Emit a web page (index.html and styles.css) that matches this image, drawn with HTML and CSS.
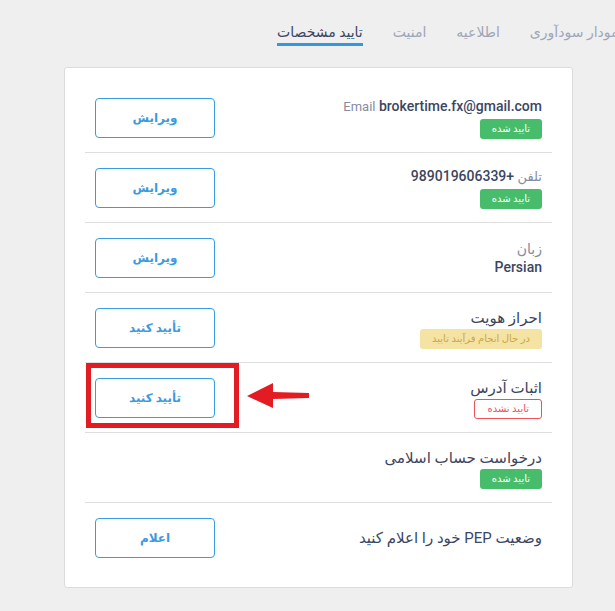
FILE: index.html
```html
<!doctype html>
<html lang="fa" dir="rtl">
<head>
    <meta charset="UTF-8">
    <title>تایید مشخصات</title>
    <link rel="stylesheet" href="styles.css">
</head>
<body>
<div class="tabs">
    <a class="tab">نمودار سودآوری</a>
    <a class="tab">اطلاعیه</a>
    <a class="tab">امنیت</a>
    <a class="tab active">تایید مشخصات</a>
</div>

<div class="card">
    <div class="rows">
        <div class="row">
            <div class="info">
                <div class="line"><span class="label">Email</span> <b>brokertime.fx@gmail.com</b></div>
                <span class="badge ok">تایید شده</span>
            </div>
            <button class="btn">ویرایش</button>
        </div>
        <div class="row">
            <div class="info">
                <div class="line"><span class="label">تلفن</span> <b>+989019606339</b></div>
                <span class="badge ok">تایید شده</span>
            </div>
            <button class="btn">ویرایش</button>
        </div>
        <div class="row">
            <div class="info">
                <div class="small label">زبان</div>
                <div class="small"><b>Persian</b></div>
            </div>
            <button class="btn">ویرایش</button>
        </div>
        <div class="row">
            <div class="info">
                <div class="title">احراز هویت</div>
                <span class="badge pending">در حال انجام فرآیند تایید</span>
            </div>
            <button class="btn">تأیید کنید</button>
        </div>
        <div class="row">
            <div class="info">
                <div class="title">اثبات آدرس</div>
                <span class="badge failed">تایید نشده</span>
            </div>
            <button class="btn">تأیید کنید</button>
        </div>
        <div class="row">
            <div class="info">
                <div class="title">درخواست حساب اسلامی</div>
                <span class="badge ok">تایید شده</span>
            </div>
        </div>
        <div class="row">
            <div class="info">
                <div class="title">وضعیت PEP خود را اعلام کنید</div>
            </div>
            <button class="btn">اعلام</button>
        </div>
    </div>

    <div class="highlight"></div>
    <svg class="arrow" width="66" height="28" viewBox="0 0 66 28">
        <polygon fill="#e31b23" points="0,14 26,1 26,10 62,11 62,16 26,17 26,26"/>
    </svg>
</div>
</body>
</html>
```

FILE: styles.css
```css
html,
body {
    margin: 0;
    overflow: hidden;
}

body {
    background: #efefef;
    font-family: Roboto, "DejaVu Sans", sans-serif;
    color: #3b4661;
    width: 615px;
    height: 611px;
}

.tabs {
    display: flex;
    gap: 30px;
    height: 46px;
    margin-right: -8px;
    white-space: nowrap;
}

.tab {
    font-size: 14px;
    color: #9ea6b8;
    padding-top: 22px;
    height: 21px;
    line-height: 20px;
}

.tab.active {
    color: #3b4661;
    border-bottom: 3px solid #3498db;
}

.card {
    position: relative;
    box-sizing: border-box;
    width: 509px;
    margin: 21px 42px 0 0;
    background: #fff;
    border: 1px solid #dcdcdc;
    border-radius: 3px;
    padding: 15px 20px;
}

.row {
    display: flex;
    align-items: center;
    justify-content: space-between;
    height: 69px;
    border-bottom: 1px solid #dedede;
    padding: 0 10px;
}

.row:last-child {
    border-bottom: none;
}

.info {
    display: flex;
    flex-direction: column;
    align-items: flex-start;
}

.line {
    font-size: 14px;
    line-height: 20px;
    margin-bottom: 2px;
}

.line b,
.small b {
    font-weight: 500;
}

.label {
    color: #858c9e;
    font-size: 13px;
}

.small {
    font-size: 14px;
    line-height: 18px;
}

.title {
    font-size: 15px;
    line-height: 22px;
}

.badge {
    box-sizing: border-box;
    height: 20px;
    line-height: 20px;
    padding: 0 12px;
    border-radius: 3px;
    font-size: 10px;
}

.badge.ok {
    background: #47bd6c;
    color: #fff;
}

.badge.pending {
    background: #f5e3a3;
    color: #c9a646;
}

.badge.failed {
    background: #fff;
    color: #f0505a;
    border: 1px solid #f0505a;
    line-height: 18px;
}

.btn {
    box-sizing: border-box;
    width: 120px;
    height: 40px;
    background: #fff;
    border: 1px solid #3a9be0;
    border-radius: 4px;
    color: #3a9be0;
    font-family: inherit;
    font-size: 12px;
    font-weight: bold;
    cursor: pointer;
}

.highlight {
    position: absolute;
    left: 21px;
    top: 295px;
    width: 153px;
    height: 65px;
    box-sizing: border-box;
    border: 5px solid #e31b23;
}

.arrow {
    position: absolute;
    left: 182px;
    top: 314px;
}
```
